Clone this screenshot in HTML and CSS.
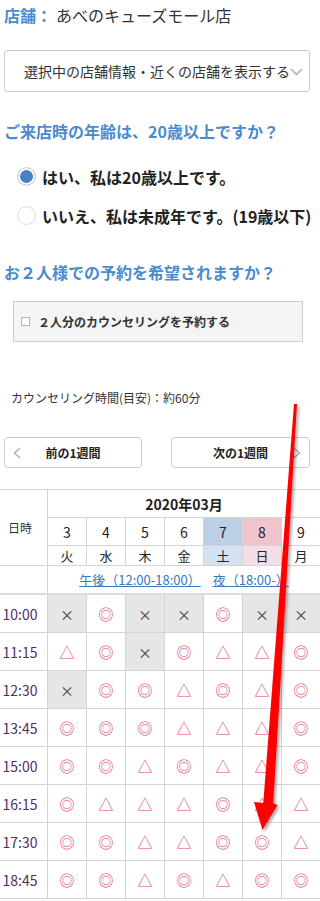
FILE: index.html
```html
<!DOCTYPE html>
<html lang="ja">
<head>
  <meta charset="UTF-8">
  <meta name="viewport" content="width=device-width, initial-scale=1">
  <title>カウンセリング予約</title>
  <link rel="stylesheet" href="styles.css">
</head>
<body>
  <div class="page">
    <p class="shop"><span class="shop-label">店舗：</span>あべのキューズモール店</p>

    <div class="store-select">
      <span>選択中の店舗情報・近くの店舗を表示する</span>
      <svg class="chev-down" width="13" height="8" viewBox="0 0 13 8"><polyline points="1,1 6.5,6.5 12,1" fill="none" stroke="#b4b4b4" stroke-width="1.6"/></svg>
    </div>

    <h3 class="question">ご来店時の年齢は、20歳以上ですか？</h3>
    <div class="radios">
      <label class="radio-row"><span class="radio checked"></span>はい、私は20歳以上です。</label>
      <label class="radio-row"><span class="radio"></span>いいえ、私は未成年です。(19歳以下)</label>
    </div>

    <h3 class="question q-pair">お２人様での予約を希望されますか？</h3>
    <label class="pair-box"><span class="checkbox"></span>２人分のカウンセリングを予約する</label>

    <p class="duration">カウンセリング時間(目安)：約60分</p>

    <div class="week-nav">
      <button class="week-btn prev">
        <svg class="chev" width="8" height="12" viewBox="0 0 8 12"><polyline points="7,1 1.5,6 7,11" fill="none" stroke="#b0b0b0" stroke-width="1.5"/></svg>
        <span class="week-label">前の1週間</span>
      </button>
      <button class="week-btn next">
        <span class="week-label">次の1週間</span>
        <svg class="chev" width="8" height="12" viewBox="0 0 8 12"><polyline points="1,1 6.5,6 1,11" fill="none" stroke="#b0b0b0" stroke-width="1.5"/></svg>
      </button>
    </div>
  </div>

  <!-- 予約カレンダー -->
  <div class="cal-head">
    <div class="head-time">日時</div>
    <div class="month">2020年03月</div>
    <div>3</div><div>4</div><div>5</div><div>6</div><div class="sat">7</div><div class="sun">8</div><div>9</div>
    <div class="wday">火</div><div class="wday">水</div><div class="wday">木</div><div class="wday">金</div><div class="wday sat-l">土</div><div class="wday sun-l">日</div><div class="wday">月</div>
    <div></div>
    <div class="period"><a href="#">午後（12:00-18:00）</a><a href="#">夜（18:00-）</a></div>
  </div>

  <div class="cal-body">
    <div class="time">10:00</div>
    <div class="x">×</div><div class="o">◎</div><div class="x">×</div><div class="x">×</div><div class="o">◎</div><div class="x">×</div><div class="x">×</div>
    <div class="time">11:15</div>
    <div class="t">△</div><div class="o">◎</div><div class="x">×</div><div class="o">◎</div><div class="t">△</div><div class="t">△</div><div class="o">◎</div>
    <div class="time">12:30</div>
    <div class="x">×</div><div class="o">◎</div><div class="o">◎</div><div class="t">△</div><div class="o">◎</div><div class="t">△</div><div class="o">◎</div>
    <div class="time">13:45</div>
    <div class="o">◎</div><div class="o">◎</div><div class="o">◎</div><div class="t">△</div><div class="t">△</div><div class="t">△</div><div class="o">◎</div>
    <div class="time">15:00</div>
    <div class="o">◎</div><div class="o">◎</div><div class="t">△</div><div class="o">◎</div><div class="t">△</div><div class="t">△</div><div class="o">◎</div>
    <div class="time">16:15</div>
    <div class="o">◎</div><div class="t">△</div><div class="t">△</div><div class="t">△</div><div class="o">◎</div><div class="t">△</div><div class="t">△</div>
    <div class="time">17:30</div>
    <div class="o">◎</div><div class="o">◎</div><div class="t">△</div><div class="t">△</div><div class="o">◎</div><div class="o">◎</div><div class="t">△</div>
    <div class="time">18:45</div>
    <div class="o">◎</div><div class="o">◎</div><div class="t">△</div><div class="o">◎</div><div class="t">△</div><div class="o">◎</div><div class="o">◎</div>
  </div>

  <!-- 注目の矢印 -->
  <svg class="arrow" width="320" height="901" viewBox="0 0 320 901">
    <defs>
      <filter id="shadow" x="-50%" y="-10%" width="200%" height="120%">
        <feDropShadow dx="2" dy="2" stdDeviation="1.5" flood-color="#000" flood-opacity="0.35"/>
      </filter>
    </defs>
    <polygon filter="url(#shadow)" fill="#ff0000" points="294,404 297,404 273.3,803.6 277.5,805 262.5,830 254,802 263.3,803"/>
  </svg>
</body>
</html>
```

FILE: styles.css
```css
body {
  margin: 0;
  font-family: "Noto Sans CJK JP", sans-serif;
  color: #333;
  background: #fff;
}
.page {
  padding: 0 4px;
}
.shop {
  margin: 4px 0 0;
  font-size: 16px;
  line-height: 22px;
}
.shop-label {
  color: #4a8bd0;
  font-weight: bold;
  margin-right: 4px;
}
.store-select {
  margin-top: 24px;
  width: 306px;
  height: 42px;
  box-sizing: border-box;
  border: 1px solid #ccc;
  border-radius: 3px;
  display: flex;
  align-items: center;
  padding-left: 19px;
  font-size: 14px;
  white-space: nowrap;
}
.chev-down {
  flex: none;
  margin-top: 2px;
}
.question {
  margin: 27px 0 0;
  font-size: 16px;
  line-height: 24px;
  font-weight: bold;
  color: #4a8bd0;
}
.q-pair {
  margin-top: 25px;
}
.radios {
  margin-top: 14px;
}
.radio-row {
  display: flex;
  align-items: center;
  gap: 6px;
  height: 39px;
  padding-left: 13px;
  font-size: 16px;
  font-weight: bold;
  color: #222;
  white-space: nowrap;
}
.radio {
  flex: none;
  width: 19px;
  height: 19px;
  box-sizing: border-box;
  border: 1px solid #dcdcdc;
  border-radius: 50%;
  background: #fff;
}
.radio.checked {
  background: #4a80c0;
  box-shadow: inset 0 0 0 2px #fff;
}
.pair-box {
  margin: 17px 0 0 9px;
  width: 290px;
  height: 41px;
  box-sizing: border-box;
  border: 1px solid #ccc;
  background: #f4f4f4;
  display: flex;
  align-items: center;
  gap: 8px;
  padding-left: 7px;
  font-size: 12px;
  font-weight: bold;
  color: #333;
}
.checkbox {
  flex: none;
  width: 9px;
  height: 9px;
  box-sizing: border-box;
  border: 1px solid #a5b8cc;
  background: #fff;
}
.duration {
  margin: 47px 0 0 7px;
  font-size: 12px;
  line-height: 18px;
}
.week-nav {
  margin-top: 30px;
  width: 306px;
  display: flex;
  justify-content: space-between;
}
.week-btn {
  height: 31px;
  box-sizing: border-box;
  border: 1px solid #ccc;
  border-radius: 4px;
  background: #fff;
  padding: 0;
  display: grid;
  grid-template-columns: 24px 1fr 24px;
  align-items: center;
  justify-items: center;
  font-family: inherit;
  font-size: 12px;
  font-weight: bold;
  color: #222;
}
.week-btn.prev {
  width: 138px;
}
.week-btn.next {
  width: 139px;
}
.week-btn.next .week-label {
  grid-column: 2;
}
.chev {
  display: block;
}

/* カレンダー */
.cal-head,
.cal-body {
  display: grid;
  grid-template-columns: 47px repeat(7, 38px);
  gap: 1px;
  background: #d4d4d4;
}
.cal-head {
  margin-top: 21px;
  border-top: 1px solid #d4d4d4;
  border-bottom: 2px solid #dcdcdc;
  grid-template-rows: 27px 27px 19px 27px;
  font-size: 14px;
  color: #222;
}
.cal-body {
  grid-auto-rows: 37px;
  border-bottom: 1px solid #d4d4d4;
}
.cal-head > div,
.cal-body > div {
  background: #fff;
  display: flex;
  align-items: center;
  justify-content: center;
}
.head-time {
  grid-row: span 3;
  padding-right: 7px;
  font-size: 12px;
  color: #333;
}
.month {
  grid-column: span 7;
  font-weight: bold;
}
.wday {
  font-size: 13px;
}
.cal-head > .sat { background: #bccfe7; }
.cal-head > .sun { background: #f1c3cc; }
.cal-head > .sat-l { background: #d3e2f2; }
.cal-head > .sun-l { background: #f5dde6; }
.period {
  grid-column: span 7;
  gap: 12px;
  font-size: 13px;
  white-space: nowrap;
}
.period a {
  color: #3b78c0;
}
.cal-body > .time {
  padding-right: 7px;
  font-size: 14px;
  color: #4f2f5f;
}
.cal-body > .x {
  background: #e6e6e6;
  color: #444;
  font-size: 14px;
}
.cal-body > .o,
.cal-body > .t {
  color: #df3f73;
  font-size: 15px;
}

.arrow {
  position: absolute;
  top: 0;
  left: 0;
  pointer-events: none;
}
```
